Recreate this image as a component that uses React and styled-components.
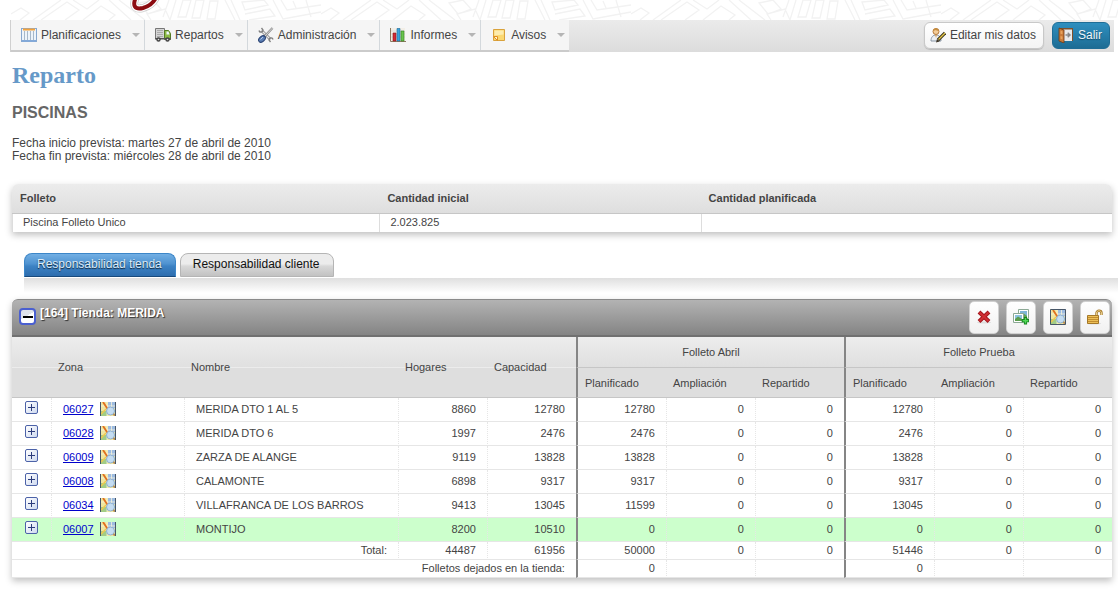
import React, { useState } from "react";
import styled, { createGlobalStyle, css } from "styled-components";

const GlobalStyle = createGlobalStyle`
  * {
    box-sizing: border-box;
  }

  body {
    margin: 0;
    background: #fff;
    color: #444;
    font-family: "Liberation Sans", Arial, sans-serif;
    font-size: 12px;
  }

  button {
    font-family: inherit;
    font-size: inherit;
    color: inherit;
    cursor: pointer;
  }
`;

const Page = styled.div`
  padding-bottom: 28px;
`;

const Banner = styled.header`
  height: 20px;
  padding-left: 11px;
  overflow: hidden;

  svg {
    display: block;
    width: 100%;
    height: 20px;
  }
`;

const Toolbar = styled.div`
  display: flex;
  justify-content: space-between;
  margin: 0 4px 0 10px;
  height: 32px;
  background: linear-gradient(#ebebeb, #dcdcdc);
  border-left: 1px solid #d0d0d0;
`;

const Menu = styled.nav`
  display: flex;
  background: #f5f5f5;
  border-bottom: 2px solid #cbcbcb;
`;

const MenuButton = styled.button`
  display: flex;
  align-items: center;
  gap: 4px;
  padding: 0 4px 0 10px;
  border: none;
  border-right: 1px solid #d3d8dc;
  background: none;
  font-size: 12px;

  &:last-child {
    border-right: none;
  }
`;

const Caret = styled.span`
  margin-left: 7px;
  border: 4px solid transparent;
  border-top-color: #b5b5b5;
  border-bottom: none;
`;

const UserActions = styled.div`
  display: flex;
  align-items: center;
  gap: 8px;
  padding: 0 4px 2px 0;
`;

const ActionButton = styled.button`
  display: flex;
  align-items: center;
  gap: 4px;
  height: 27px;
  padding: 0 7px 0 5px;
  border: 1px solid #c8c8c8;
  border-radius: 6px;
  background: linear-gradient(#fff, #f4f4f4);
  box-shadow: 0 1px 1px #bbb;

  ${({ $primary }) =>
    $primary &&
    css`
      border-color: #1f6d96;
      background: linear-gradient(#2f8fbf, #1d6c94);
      box-shadow: none;
      color: #f0f6fa;
      text-shadow: 0 1px 1px #134a66;
    `}
`;

const Intro = styled.section`
  padding: 10px 12px 0;
`;

const PageTitle = styled.h1`
  margin: 0;
  color: #6699c8;
  font: bold 24px/26px "Liberation Serif", "Times New Roman", serif;
`;

const Campaign = styled.h2`
  margin: 15px 0 14px;
  color: #666;
  font-size: 16px;
  line-height: 20px;
`;

const Dates = styled.p`
  margin: 0;
  line-height: 13px;
`;

const Card = styled.section`
  margin: 0 6px 0 12px;
  border-radius: 6px 6px 0 0;
  box-shadow: 0 3px 7px rgba(0, 0, 0, 0.25);
`;

const SummaryCard = styled(Card)`
  margin-top: 21px;
`;

const Table = styled.table`
  width: 100%;
  table-layout: fixed;
  border-collapse: separate;
  border-spacing: 0;
  font-size: 11px;
`;

const SummaryHead = styled.th`
  height: 30px;
  padding: 0 8px 2px;
  border-bottom: 1px solid #c6c6c6;
  background: linear-gradient(#ececec, #dedede);
  text-align: left;

  &:first-child {
    border-top-left-radius: 6px;
  }

  &:last-child {
    border-top-right-radius: 6px;
  }
`;

const SummaryCell = styled.td`
  height: 18px;
  padding: 0 10px 2px;
  border-left: 1px solid #ddd;
  background: #fff;
`;

const Tabs = styled.div`
  display: flex;
  gap: 4px;
  padding: 21px 24px 0;
`;

const Tab = styled.button`
  height: 24px;
  padding: 0 13px 2px 12px;
  border: 1px solid #b5b5b5;
  border-radius: 8px 8px 0 0;
  background: linear-gradient(#ececec 0 45%, #d8d8d8 55%, #c2c2c2);
  color: #111;

  &[aria-selected="true"] {
    border-color: #3c86c8 #3c86c8 #194a7c;
    background: linear-gradient(#72afe4, #4e92d0 45%, #3c82c4 55%, #2d6dae);
    color: #dcebf7;
    text-shadow: 0 1px 1px #123;
  }
`;

const TabStrip = styled.div`
  height: 15px;
  margin: 1px 0 6px 24px;
  background: linear-gradient(#dfdfdf, #fff);
`;

const StoreHeader = styled.div`
  display: flex;
  align-items: flex-start;
  height: 38px;
  padding: 2px 2px 0 7px;
  border: 1px solid #8a8a8a;
  border-width: 1px 0 2px;
  border-bottom-color: #707070;
  border-radius: 6px 6px 0 0;
  background: linear-gradient(#b3b3b3, #848484);
`;

const Collapse = styled.button`
  display: flex;
  align-items: center;
  justify-content: center;
  width: 17px;
  height: 17px;
  margin: 6px 4px 0 0;
  padding: 0;
  border: 2px solid #4a5fd0;
  border-radius: 4px;
  background: linear-gradient(150deg, #dfe2ea 45%, #fff 46%);

  span {
    width: 10px;
    height: 2px;
    background: #000;
  }
`;

const StoreName = styled.h3`
  flex: 1;
  margin: 4px 0 0;
  color: #fff;
  font-size: 12px;
  line-height: 14px;
  text-shadow: 1px 1px 1px #333;
`;

const StoreActions = styled.div`
  display: flex;
  gap: 7px;
`;

const IconButton = styled.button`
  display: flex;
  align-items: center;
  justify-content: center;
  width: 30px;
  height: 33px;
  margin-top: -1px;
  padding: 0 0 2px;
  border: 1px solid #d0d0d0;
  border-radius: 5px;
  background: linear-gradient(#fff, #f0f0f0);
`;

const HeadCell = styled.th`
  height: 30px;
  padding: 0 7px;
  background: #dedede;
  border-bottom: 1px solid #c6c6c6;
  border-left: ${({ $edge }) => ($edge ? "2px solid #858585" : "none")};
  font-weight: normal;
  text-align: left;
`;

const TallHead = styled(HeadCell)`
  background: linear-gradient(
    #ededed,
    #e0e0e0 30px,
    #ececec 30px,
    #ececec 31px,
    #dedede 31px
  );
`;

const GroupHead = styled(HeadCell)`
  height: 31px;
  background: linear-gradient(#ededed, #dfdfdf);
  text-align: center;
`;

const Row = styled.tr`
  height: ${({ $short }) => ($short ? "18px" : "24px")};
  background: ${({ $marked }) => ($marked ? "#ccffcc" : "#fff")};
`;

const Cell = styled.td`
  padding: 0 11px 2px;
  border-bottom: 1px solid #e6e6e6;
  border-left: ${({ $edge, $plain }) =>
    $edge ? "2px solid #858585" : $plain ? "none" : "1px dotted #e6e6e6"};
  text-align: ${({ $right }) => ($right ? "right" : "left")};
  white-space: nowrap;
`;

const ExpandCell = styled(Cell)`
  padding: 0 12px 2px 13px;
`;

const Expand = styled.button`
  display: block;
  width: 13px;
  height: 13px;
  margin-bottom: 2px;
  padding: 0;
  border: 1px solid #4c62a8;
  border-radius: 2px;
  background: linear-gradient(135deg, #fff, #cfdaf0);

  svg {
    display: block;
  }
`;

const Zone = styled.div`
  display: flex;
  align-items: center;
  gap: 6px;

  a {
    color: #0000cc;
  }
`;

const CalendarIcon = () => (
  <svg width="16" height="16" viewBox="0 0 16 16" aria-hidden="true">
    <rect x=".5" y="1.5" width="15" height="13" fill="#edf4fb" stroke="#88a8cf" />
    <path d="M1 13h14v2H1z" fill="#83a9d8" />
    <path d="M2 2.5h12" stroke="#f3a33c" strokeWidth="2" />
    <path d="M3.5 4v9M6.5 4v9M9.5 4v9M12.5 4v9" stroke="#a7b8c9" />
  </svg>
);

const TruckIcon = () => (
  <svg width="16" height="16" viewBox="0 0 16 16" aria-hidden="true">
    <path d="M.5 1.5h9v10h-9z" fill="#d5d5d5" stroke="#777" />
    <path d="M2 3.5h6M2 5.5h6M2 7.5h6M2 9.5h6" stroke="#aaa" />
    <path d="M9.5 3.5h4l2 3v6h-6z" fill="#8dbb45" stroke="#557b23" />
    <path d="M11.500 4.500h2l1 3h-3z" fill="#eef6ff" />
    <path d="M0 11h16v1.500H0z" fill="#555" />
    <circle cx="3.500" cy="12.500" r="2.200" fill="#444" />
    <circle cx="3.500" cy="12.500" r=".8" fill="#ddd" />
    <circle cx="12.500" cy="12.500" r="2.200" fill="#444" />
    <circle cx="12.500" cy="12.500" r=".8" fill="#ddd" />
  </svg>
);

const ToolsIcon = () => (
  <svg width="16" height="16" viewBox="0 0 16 16" aria-hidden="true">
    <path d="M3.500 3.500l9 9" stroke="#888" strokeWidth="2.800" />
    <path d="M3.500 3.500l9 9" stroke="#e8e8e8" strokeWidth="1.200" />
    <path d="M1 3.500c.5 2.500 4 2 4-.5L3.500 1M15 12.500c-.5-2.500-4-2-4 .5l1.500 2" fill="none" stroke="#808080" strokeWidth="1.300" />
    <path d="M14.500 1l-8 8.500" stroke="#888" strokeWidth="2.200" />
    <path d="M14.500 1l-8 8.500" stroke="#eee" strokeWidth=".8" />
    <ellipse cx="4" cy="12" rx="3.800" ry="2.600" transform="rotate(-42 4 12)" fill="#5c7fb5" stroke="#263f70" />
    <path d="M2.500 12.500l2.500-2.500" stroke="#b4cbed" />
  </svg>
);

const ChartIcon = () => (
  <svg width="16" height="16" viewBox="0 0 16 16" aria-hidden="true">
    <path d="M1 1h14v13H1z" fill="#f2eee6" />
    <path d="M.5 1v13.500H16" fill="none" stroke="#8c7960" />
    <path d="M1 4h14M1 7h14M1 10h14" stroke="#ccc" strokeWidth=".6" />
    <path d="M3 6h3v8H3z" fill="#d22b35" stroke="#8c1119" strokeWidth=".6" />
    <path d="M7 1.500h3V14H7z" fill="#39a4dc" stroke="#1b6498" strokeWidth=".6" />
    <path d="M11 4h3v10h-3z" fill="#69c34d" stroke="#2f7f23" strokeWidth=".6" />
  </svg>
);

const NoteIcon = () => (
  <svg width="16" height="16" viewBox="0 0 16 16" aria-hidden="true">
    <path d="M2.500 2.500h11v11h-11z" fill="#fbd870" stroke="#d9a23c" />
    <path d="M3.500 3.500h9v4l-9 1z" fill="#fdecae" />
    <path d="M2.500 9.500h4v4z" fill="#fff4cf" stroke="#e08f22" />
  </svg>
);

const UserEditIcon = () => (
  <svg width="16" height="16" viewBox="0 0 16 16" aria-hidden="true">
    <path d="M1 14c0-4 2-6 5-6s5 2 5 6z" fill="#eceff3" stroke="#8b98a6" />
    <path d="M5 8l1 3 1-3" fill="#d9a96c" />
    <circle cx="6" cy="4.500" r="3" fill="#f3cc98" stroke="#b67a3d" />
    <path d="M3 4c0-3 5-4 6 0-2 0-3-1-3-1z" fill="#c68d40" />
    <path d="M15 6l-7 7" stroke="#3a3520" strokeWidth="3.200" />
    <path d="M15 6l-6.500 6.500" stroke="#e9c945" strokeWidth="1.300" />
    <path d="M6 15.500l1-3.500 2.500 2.500z" fill="#3f3526" />
  </svg>
);

const DoorIcon = () => (
  <svg width="16" height="16" viewBox="0 0 16 16" aria-hidden="true">
    <path d="M1 1h14v13H1z" fill="#81502a" />
    <path d="M5 2.500h9V14H5z" fill="#e9eaeb" />
    <path d="M1 1l5 2v13l-5-2z" fill="#c87a38" stroke="#6e3a14" strokeWidth=".8" />
    <path d="M2.500 3.500l2 .8v3l-2-.5zM2.500 9l2 .5v3l-2-.7z" fill="#e8a25c" />
    <path d="M7.500 8h4M9.700 5.800L12 8l-2.300 2.200" fill="none" stroke="#888" strokeWidth="1.400" />
  </svg>
);

const DeleteIcon = () => (
  <svg width="16" height="16" viewBox="0 0 16 16" aria-hidden="true">
    <ellipse cx="8" cy="13.500" rx="7" ry="1" fill="#ddd" />
    <path d="M3 3l10 9.500M13 3L3 12.500" stroke="#a3151b" strokeWidth="4" />
    <path d="M3.500 3.500l9 8.500M12.500 3.500l-9 8.500" stroke="#cf2f34" strokeWidth="2.200" />
  </svg>
);

const AddImageIcon = () => (
  <svg width="16" height="16" viewBox="0 0 16 16" aria-hidden="true">
    <path d="M5.500.5h10v9h-10z" fill="#fff" stroke="#8ca995" />
    <path d="M7 2h7v6H7z" fill="#7fb6d9" />
    <path d="M7 6l3-2 4 3v1H7z" fill="#60a251" />
    <path d="M.5 4.500h10v9H.5z" fill="#fff" stroke="#8ca995" />
    <path d="M2 6h7v6H2z" fill="#8cc2df" />
    <path d="M2 10l3-2.500L9 10v2H2z" fill="#5b9d4d" />
    <path d="M12.500 8v7.500M8.700 11.700h7.300" stroke="#178521" strokeWidth="3.200" />
    <path d="M12.500 9v5.500M9.700 11.700h5.500" stroke="#52d957" strokeWidth="1.400" />
  </svg>
);

const MapIcon = ({ framed }) => (
  <svg width="16" height={framed ? 16 : 14} viewBox={framed ? "0 0 16 16" : "0 1 16 14"} aria-hidden="true">
    <path d="M0 0h16v16H0z" fill="#f0e6a0" />
    <path d="M8 0h8v7H8z" fill="#9dbbe0" />
    <path d="M0 10h7v6H0z" fill="#a3cc85" />
    <path d="M0 5h16M7 0v16M11.500 0v7" stroke="#f7f4dc" strokeWidth=".8" />
    <path d="M3 1l5 7.500" stroke="#e0701f" strokeWidth="1.800" />
    <path d="M1 13l5-5" stroke="#f2c84c" strokeWidth="1.500" />
    <circle cx="10.500" cy="10" r="4" fill="#c4dcf1" stroke="#8fb0cf" />
    <path d="M13.300 13l1.700 1.500" stroke="#b68b54" strokeWidth="1.800" />
    <path d={framed ? "M.5.5h15v15H.5z" : "M.5 0v16M15.500 0v16"} fill="none" stroke="#465567" />
  </svg>
);

const UnlockIcon = () => (
  <svg width="16" height="16" viewBox="0 0 16 16" aria-hidden="true">
    <ellipse cx="7" cy="14.500" rx="7" ry="1" fill="#ddd" />
    <path d="M9.500 7V4c0-3 5-3 5 0v2" fill="none" stroke="#a57828" strokeWidth="2.400" />
    <path d="M9.500 7V4c0-3 5-3 5 0v2" fill="none" stroke="#e9cf88" strokeWidth="1" />
    <path d="M.5 6.500h11v8H.5z" fill="#edc057" stroke="#a57828" />
    <path d="M1 8.500h10M1 10.500h10M1 12.500h10" stroke="#c18d30" />
  </svg>
);

// street map texture with the tail of the script logo over it
const BannerArt = () => (
  <svg viewBox="0 0 1107 20" preserveAspectRatio="xMinYMin slice" aria-hidden="true">
    <defs>
      <pattern id="streets" width="310" height="20" patternUnits="userSpaceOnUse">
        <g fill="none" stroke="#f2f2f2" strokeWidth="1.300">
          <path d="M0 14l10-6 8 5-9 7M22 20L50 0M30 20L56 2l12 8-14 10M62 0l14 9 12-9M72 20l18-14 14 9-6 5M98 0l22 20M108 0l26 20M128 3l14-3 8 9-13 5zM140 20l-4-6 18-5 5 11M158 0l-6 17M165 0l-6 20M172 0h8l-5 17h-8zM185 0h8l-4 18h-8zM199 1h8l-3 18h-8zM214 0l10 20M220 0l9 20M231 2l22-2 4 5-23 5zM234 14l25-5 5 7-26 4M262 0l10 19 38-7M270 0l6 10 34-5M282 1l3 7M295 0l5 17" />
        </g>
      </pattern>
    </defs>
    <rect width="1107" height="20" fill="url(#streets)" />
    <g fill="none" strokeLinecap="round">
      <path d="M125 -3c-4 9-1 13 7 11 7-2 12-7 14-13" stroke="#ccc" strokeWidth="8" />
      <path d="M125 -3c-4 9-1 13 7 11 7-2 12-7 14-13" stroke="#fff" strokeWidth="6.500" />
      <path d="M125 -3c-4 9-1 13 7 11 7-2 12-7 14-13" stroke="#8c0d12" strokeWidth="4" />
    </g>
  </svg>
);

const MENU = [
  { label: "Planificaciones", Icon: CalendarIcon },
  { label: "Repartos", Icon: TruckIcon },
  { label: "Administración", Icon: ToolsIcon },
  { label: "Informes", Icon: ChartIcon },
  { label: "Avisos", Icon: NoteIcon },
];

const STORE_ACTIONS = [
  { label: "Eliminar", icon: <DeleteIcon /> },
  { label: "Añadir imagen", icon: <AddImageIcon /> },
  { label: "Ver mapa", icon: <MapIcon framed /> },
  { label: "Desbloquear", icon: <UnlockIcon /> },
];

const TABS = ["Responsabilidad tienda", "Responsabilidad cliente"];
const FLYERS = ["Folleto Abril", "Folleto Prueba"];
const FLYER_COLUMNS = ["Planificado", "Ampliación", "Repartido"];

const ZONES = [
  { id: "06027", name: "MERIDA DTO 1 AL 5", homes: 8860, capacity: 12780, values: [12780, 0, 0, 12780, 0, 0] },
  { id: "06028", name: "MERIDA DTO 6", homes: 1997, capacity: 2476, values: [2476, 0, 0, 2476, 0, 0] },
  { id: "06009", name: "ZARZA DE ALANGE", homes: 9119, capacity: 13828, values: [13828, 0, 0, 13828, 0, 0] },
  { id: "06008", name: "CALAMONTE", homes: 6898, capacity: 9317, values: [9317, 0, 0, 9317, 0, 0] },
  { id: "06034", name: "VILLAFRANCA DE LOS BARROS", homes: 9413, capacity: 13045, values: [11599, 0, 0, 13045, 0, 0] },
  { id: "06007", name: "MONTIJO", homes: 8200, capacity: 10510, values: [0, 0, 0, 0, 0, 0], marked: true },
];

const TOTALS = [50000, 0, 0, 51446, 0, 0];
const LEFT_IN_STORE = [0, "", "", 0, "", ""];

const Col = styled.col`
  width: ${({ $width }) => $width};
`;

const FlyerCells = ({ values }) =>
  values.map((value, i) => (
    <Cell key={i} $right $edge={i % 3 === 0}>
      {value}
    </Cell>
  ));

const ZoneTable = () => (
  <Table>
    <colgroup>
      <Col $width="39px" />
      <Col $width="133px" />
      <Col />
      <Col $width="89px" />
      <Col $width="89px" />
      <Col $width="90px" />
      <Col $width="89px" />
      <Col $width="89px" />
      <Col $width="90px" />
      <Col $width="89px" />
      <Col $width="89px" />
    </colgroup>
    <thead>
      <tr>
        <TallHead as="td" rowSpan={2} />
        <TallHead rowSpan={2}>Zona</TallHead>
        <TallHead rowSpan={2}>Nombre</TallHead>
        <TallHead rowSpan={2}>Hogares</TallHead>
        <TallHead rowSpan={2}>Capacidad</TallHead>
        {FLYERS.map((flyer) => (
          <GroupHead key={flyer} colSpan={3} $edge>
            {flyer}
          </GroupHead>
        ))}
      </tr>
      <tr>
        {FLYERS.map((flyer) =>
          FLYER_COLUMNS.map((column, i) => (
            <HeadCell key={flyer + column} $edge={i === 0}>
              {column}
            </HeadCell>
          ))
        )}
      </tr>
    </thead>
    <tbody>
      {ZONES.map((zone) => (
        <Row key={zone.id} $marked={zone.marked}>
          <ExpandCell $plain>
            <Expand aria-label={`Desplegar ${zone.id}`}>
              <svg width="11" height="11" viewBox="0 0 11 11" aria-hidden="true">
                <path d="M2 5.500h7M5.500 2v7" stroke="#2c3c7c" />
              </svg>
            </Expand>
          </ExpandCell>
          <Cell>
            <Zone>
              <a href={`#zona-${zone.id}`}>{zone.id}</a>
              <MapIcon />
            </Zone>
          </Cell>
          <Cell>{zone.name}</Cell>
          <Cell $right>{zone.homes}</Cell>
          <Cell $right>{zone.capacity}</Cell>
          <FlyerCells values={zone.values} />
        </Row>
      ))}
      <Row $short>
        <Cell $right $plain colSpan={3}>
          Total:
        </Cell>
        <Cell $right>44487</Cell>
        <Cell $right>61956</Cell>
        <FlyerCells values={TOTALS} />
      </Row>
      <Row $short>
        <Cell $right $plain colSpan={5}>
          Folletos dejados en la tienda:
        </Cell>
        <FlyerCells values={LEFT_IN_STORE} />
      </Row>
    </tbody>
  </Table>
);

const App = () => {
  const [tab, setTab] = useState(TABS[0]);
  const [open, setOpen] = useState(true);

  return (
    <Page>
      <GlobalStyle />
      <Banner>
        <BannerArt />
      </Banner>
      <Toolbar>
        <Menu>
          {MENU.map(({ label, Icon }) => (
            <MenuButton key={label}>
              <Icon />
              {label}
              <Caret />
            </MenuButton>
          ))}
        </Menu>
        <UserActions>
          <ActionButton>
            <UserEditIcon />
            Editar mis datos
          </ActionButton>
          <ActionButton $primary>
            <DoorIcon />
            Salir
          </ActionButton>
        </UserActions>
      </Toolbar>
      <Intro>
        <PageTitle>Reparto</PageTitle>
        <Campaign>PISCINAS</Campaign>
        <Dates>
          Fecha inicio prevista: martes 27 de abril de 2010
          <br />
          Fecha fin prevista: miércoles 28 de abril de 2010
        </Dates>
      </Intro>
      <SummaryCard>
        <Table>
          <colgroup>
            <Col $width="33.4%" />
            <Col $width="29.2%" />
            <Col />
          </colgroup>
          <thead>
            <tr>
              <SummaryHead>Folleto</SummaryHead>
              <SummaryHead>Cantidad inicial</SummaryHead>
              <SummaryHead>Cantidad planificada</SummaryHead>
            </tr>
          </thead>
          <tbody>
            <tr>
              <SummaryCell>Piscina Folleto Unico</SummaryCell>
              <SummaryCell>2.023.825</SummaryCell>
              <SummaryCell />
            </tr>
          </tbody>
        </Table>
      </SummaryCard>
      <Tabs role="tablist">
        {TABS.map((name) => (
          <Tab
            key={name}
            role="tab"
            aria-selected={tab === name}
            onClick={() => setTab(name)}
          >
            {name}
          </Tab>
        ))}
      </Tabs>
      <TabStrip />
      <Card>
        <StoreHeader>
          <Collapse aria-label="Plegar tienda" onClick={() => setOpen(!open)}>
            <span />
          </Collapse>
          <StoreName>[164] Tienda: MERIDA</StoreName>
          <StoreActions>
            {STORE_ACTIONS.map(({ label, icon }) => (
              <IconButton key={label} aria-label={label}>
                {icon}
              </IconButton>
            ))}
          </StoreActions>
        </StoreHeader>
        {open && <ZoneTable />}
      </Card>
    </Page>
  );
};

export default App;
